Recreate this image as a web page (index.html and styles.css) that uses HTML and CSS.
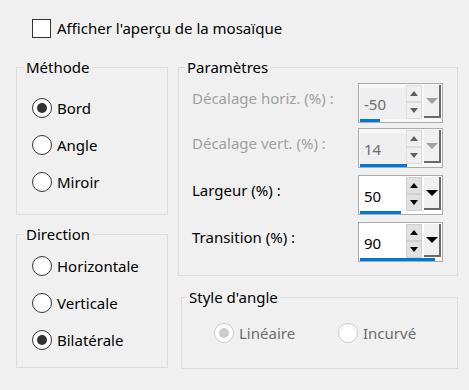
FILE: index.html
```html
<!DOCTYPE html>
<html lang="fr">
<head>
  <meta charset="UTF-8" />
  <title>Mosaïque</title>
  <link rel="stylesheet" href="styles.css">
</head>
<body>
  <div class="dialog">
    <label class="check-row">
      <span class="check-box"></span>
      <span>Afficher l'aperçu de la mosaïque</span>
    </label>

    <div class="columns">
      <div class="col-left">
        <fieldset class="group method">
          <legend>Méthode</legend>
          <div class="group-body">
            <div class="radio checked"><span class="dot"></span>Bord</div>
            <div class="radio"><span class="dot"></span>Angle</div>
            <div class="radio"><span class="dot"></span>Miroir</div>
          </div>
        </fieldset>
        <fieldset class="group direction">
          <legend>Direction</legend>
          <div class="group-body">
            <div class="radio"><span class="dot"></span>Horizontale</div>
            <div class="radio"><span class="dot"></span>Verticale</div>
            <div class="radio checked"><span class="dot"></span>Bilatérale</div>
          </div>
        </fieldset>
      </div>

      <div class="col-right">
        <fieldset class="group params">
          <legend>Paramètres</legend>
          <div class="group-body">
            <div class="param disabled">
              <span class="param-label">Décalage horiz. (%) :</span>
              <div class="spin">
                <div class="spin-top">
                  <span class="field">-50</span>
                  <div class="arrows"><span class="arrow up"></span><span class="arrow down"></span></div>
                  <div class="drop"><span class="tri"></span></div>
                </div>
                <div class="track"><span class="bar" style="width: 20px"></span></div>
              </div>
            </div>
            <div class="param disabled">
              <span class="param-label">Décalage vert. (%) :</span>
              <div class="spin">
                <div class="spin-top">
                  <span class="field">14</span>
                  <div class="arrows"><span class="arrow up"></span><span class="arrow down"></span></div>
                  <div class="drop"><span class="tri"></span></div>
                </div>
                <div class="track"><span class="bar" style="width: 47px"></span></div>
              </div>
            </div>
            <div class="param">
              <span class="param-label">Largeur (%) :</span>
              <div class="spin">
                <div class="spin-top">
                  <span class="field">50</span>
                  <div class="arrows"><span class="arrow up"></span><span class="arrow down"></span></div>
                  <div class="drop"><span class="tri"></span></div>
                </div>
                <div class="track"><span class="bar" style="width: 41px"></span></div>
              </div>
            </div>
            <div class="param">
              <span class="param-label">Transition (%) :</span>
              <div class="spin">
                <div class="spin-top">
                  <span class="field">90</span>
                  <div class="arrows"><span class="arrow up"></span><span class="arrow down"></span></div>
                  <div class="drop"><span class="tri"></span></div>
                </div>
                <div class="track"><span class="bar" style="width: 75px"></span></div>
              </div>
            </div>
          </div>
        </fieldset>
        <fieldset class="group corner">
          <legend>Style d'angle</legend>
          <div class="group-body">
            <div class="radio off checked"><span class="dot"></span>Linéaire</div>
            <div class="radio off"><span class="dot"></span>Incurvé</div>
          </div>
        </fieldset>
      </div>
    </div>
  </div>
</body>
</html>
```

FILE: styles.css
```css
body {
  margin: 0;
  background: #f0f0f0;
  font-family: 'Noto Sans', sans-serif;
  font-size: 15px;
  color: #000;
}
.dialog {
  width: 469px;
  height: 390px;
  box-sizing: border-box;
  padding: 18px 0 0 16px;
}
.check-row {
  display: flex;
  align-items: center;
  gap: 6px;
  height: 20px;
  margin-left: 16px;
}
.check-box {
  width: 17px;
  height: 17px;
  border: 1px solid #333;
  background: #fff;
}
.columns {
  display: flex;
  gap: 10px;
  margin-top: 18px;
}
.col-left {
  width: 152px;
  display: flex;
  flex-direction: column;
  gap: 8px;
}
.col-right {
  width: 280px;
  display: flex;
  flex-direction: column;
  gap: 10px;
}
.group {
  margin: 0;
  padding: 0;
  border: 1px solid #dcdcdc;
  min-width: 0;
  box-sizing: border-box;
}
.group legend {
  margin-left: 7px;
  padding: 0 2px;
  line-height: 22px;
}
.method .group-body {
  padding: 11px 0 14px 15px;
}
.direction .group-body {
  padding: 2px 0 9px 15px;
}
.radio {
  display: flex;
  align-items: center;
  gap: 5px;
  height: 37px;
}
.dot {
  width: 18px;
  height: 18px;
  border: 1px solid #333;
  border-radius: 50%;
  background: #fff;
  display: flex;
  align-items: center;
  justify-content: center;
}
.radio.checked .dot::after {
  content: "";
  width: 10px;
  height: 10px;
  border-radius: 50%;
  background: #333;
}
.radio.off {
  color: #6d6d6d;
}
.radio.off .dot {
  border-color: #cccccc;
}
.radio.off.checked .dot::after {
  background: #cccccc;
}

.params legend {
  margin-left: 6px;
}
.params .group-body {
  padding: 5px 0 13px 13px;
}
.param {
  display: flex;
  align-items: flex-start;
  height: 40px;
  margin-top: 7px;
}
.param:first-child {
  margin-top: 0;
}
.param + .param.disabled {
  margin-top: 5px;
}
.param-label {
  width: 166px;
  margin-top: 4px;
  line-height: 22px;
}
.param.disabled .param-label {
  color: #a0a0a0;
}
.spin {
  width: 85px;
  height: 40px;
  box-sizing: border-box;
  border: 1px solid #acacac;
  background: #fff;
  display: flex;
  flex-direction: column;
  padding: 1px 1px 0 1px;
}
.spin-top {
  flex: 1;
  display: flex;
}
.field {
  flex: 1;
  min-width: 0;
  display: flex;
  align-items: center;
  padding: 3px 0 0 4px;
}
.track {
  height: 3px;
  display: flex;
}
.bar {
  height: 3px;
  background: #0078d7;
}
.param.disabled .spin {
  background: #f7f7f7;
}
.param.disabled .field {
  background: #efefef;
  margin-top: 3px;
  padding-top: 0;
  color: #6d6d6d;
}
.arrows {
  width: 16px;
  display: flex;
  flex-direction: column;
  margin-right: 2px;
}
.arrow {
  flex: 1;
  background: #e1e1e1;
  border: 1px solid #cfcfcf;
  display: flex;
  align-items: center;
  justify-content: center;
}
.arrow::after {
  content: "";
  border-left: 4px solid transparent;
  border-right: 4px solid transparent;
}
.arrow.up::after {
  border-bottom: 5px solid #000;
}
.arrow.down::after {
  border-top: 5px solid #000;
}
.drop {
  width: 15px;
  margin-bottom: 1px;
  background: #f0f0f0;
  border-right: 2px solid #6a6a6a;
  border-bottom: 2px solid #6a6a6a;
  display: flex;
  align-items: center;
  justify-content: center;
}
.tri {
  border-left: 6px solid transparent;
  border-right: 6px solid transparent;
  border-top: 6px solid #000;
}
.param.disabled .arrow {
  background: #f0f0f0;
  border-color: #dddddd;
}
.param.disabled .arrow.up::after {
  border-bottom-color: #606060;
}
.param.disabled .arrow.down::after {
  border-top-color: #606060;
}
.param.disabled .tri {
  border-top-color: #a0a0a0;
}

.corner {
  margin-left: 3px;
}
.corner legend {
  margin-left: 5px;
}
.corner .group-body {
  display: flex;
  padding: 6px 0 17px 32px;
}
.corner .radio:first-child {
  width: 124px;
}
```
